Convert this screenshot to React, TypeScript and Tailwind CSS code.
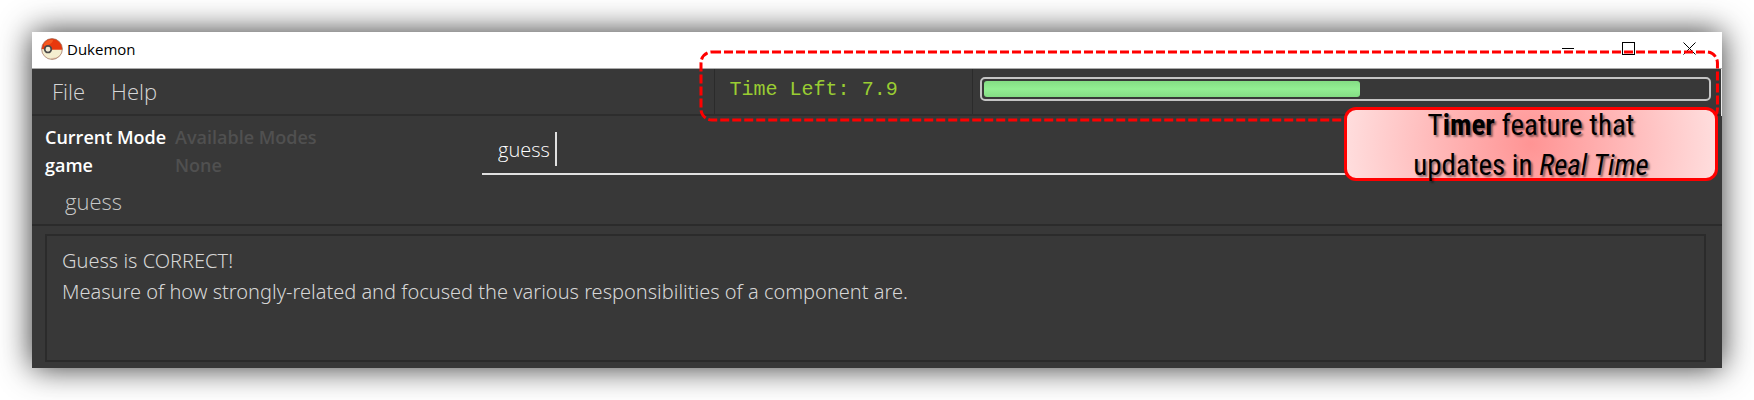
import type { ReactNode } from "react";

const TIME_LEFT = 7.9;
const TIME_TOTAL = 15.2;

const MODES = [
  ["Current Mode", "Available Modes"],
  ["game", "None"],
];

const RESULT = [
  "Guess is CORRECT!",
  "Measure of how strongly-related and focused the various responsibilities of a component are.",
].join("\n");

function BallIcon() {
  return (
    <svg viewBox="0 0 22 22" className="size-[22px]" aria-hidden="true">
      <defs>
        <clipPath id="ball">
          <circle cx="11" cy="11" r="10.4" />
        </clipPath>
      </defs>
      <g clipPath="url(#ball)">
        <rect width="22" height="22" fill="#f4eed0" />
        <path d="M22 12 C21 17 17 20 10 20 L11 23 L23 22 Z" fill="#e2c9ae" />
        <path d="M0 0 H22 V11.8 H10 L0 11 Z" fill="#e8380d" />
        <path d="M3 6 C5 2 10 1 12 2 C12 5 8 7 3 8 Z" fill="#f4581f" />
      </g>
      <circle cx="11" cy="11" r="10.4" fill="none" stroke="#9a6a58" strokeWidth="0.7" />
      <circle cx="7" cy="11.2" r="3.3" fill="#f1ead2" stroke="#4a4a4a" strokeWidth="1.7" />
    </svg>
  );
}

function WindowButton({ label, children }: { label: string; children: ReactNode }) {
  return (
    <button type="button" aria-label={label} className="flex h-full w-[61px] items-center justify-center">
      <svg viewBox="0 0 13 13" className="size-[13px]" fill="none" stroke="#000" shapeRendering="crispEdges">
        {children}
      </svg>
    </button>
  );
}

function TitleBar() {
  return (
    <header className="flex h-[37px] items-center border-b border-[#aaaaaa] bg-white">
      <div className="flex flex-1 items-center gap-1 pb-0.5 pl-[9px]">
        <BallIcon />
        <h1 className="text-[15px] leading-5 text-black">Dukemon</h1>
      </div>
      <div className="flex h-full pr-0.5 pb-1">
        <WindowButton label="Minimize">
          <path d="M0.5 6.5 H12.5" />
        </WindowButton>
        <WindowButton label="Maximize">
          <rect x="0.5" y="0.5" width="12" height="12" />
        </WindowButton>
        <WindowButton label="Close">
          <path d="M0.5 0.5 L12.5 12.5 M12.5 0.5 L0.5 12.5" shapeRendering="auto" />
        </WindowButton>
      </div>
    </header>
  );
}

function TimerBar() {
  return (
    <div className="flex items-start pt-2 pr-2.5 pl-[7px]">
      <div
        role="progressbar"
        aria-label="Time left"
        aria-valuemin={0}
        aria-valuemax={TIME_TOTAL}
        aria-valuenow={TIME_LEFT}
        className="h-6 flex-1 rounded-[5px] border-2 border-[#c4c4c4] p-0.5"
      >
        <div
          className="h-full rounded-[3px] bg-linear-to-b from-[#84dd84] via-[#93ee93] to-[#84dd84]"
          style={{ width: `${(TIME_LEFT / TIME_TOTAL) * 100}%` }}
        />
      </div>
    </div>
  );
}

function MenuRow() {
  return (
    <div className="border-r border-[#e8e8e8]">
      <div className="grid h-[47px] grid-cols-[682fr_259fr_749fr] border-b-2 border-[#2d2d2d]">
        <nav className="flex items-center gap-[26px] pb-0.5 pl-5 text-[22px] leading-[30px] font-light text-[#d6d6d6]">
          <button type="button">File</button>
          <button type="button">Help</button>
        </nav>
        <p className="border-l border-[#2b2b2b] pt-[7px] pl-[15px] font-['Liberation_Mono',monospace] text-[20px] leading-7 text-[#9acd32]">
          Time Left: {TIME_LEFT}
        </p>
        <div className="border-l border-[#2b2b2b]">
          <TimerBar />
        </div>
      </div>
    </div>
  );
}

function ModeTable() {
  return (
    <table className="text-left text-[18px] leading-7 font-semibold">
      <tbody>
        {MODES.map(([current, available]) => (
          <tr key={current}>
            <td className="w-[130px] p-0 whitespace-nowrap text-white">{current}</td>
            <td className="p-0 whitespace-nowrap text-[#505050]">{available}</td>
          </tr>
        ))}
      </tbody>
    </table>
  );
}

function CommandRow() {
  return (
    <div className="grid h-[110px] grid-cols-[450fr_1240fr] border-b-2 border-[#2b2b2b]">
      <div className="pt-[7px] pl-[13px]">
        <ModeTable />
        <p className="mt-1 pl-5 text-[22px] leading-9 font-light text-[#c8c8c8]">guess</p>
      </div>
      <div className="pt-4 pr-4">
        <label className="flex h-[43px] cursor-text items-start border-b-2 border-[#e0e0e0] pl-4">
          <input
            type="text"
            aria-label="Command"
            defaultValue="guess "
            className="field-sizing-content bg-transparent text-[20px] leading-9 font-light text-white outline-none"
          />
          <span className="h-[34px] w-0.5 bg-[#e0e0e0]" />
        </label>
      </div>
    </div>
  );
}

function TimerHighlight() {
  return (
    <div className="pointer-events-none absolute top-[19px] right-1 left-[39.5%] h-[70px]">
      <svg className="size-full overflow-visible p-px" aria-hidden="true">
        <rect
          width="100%"
          height="100%"
          rx="11"
          fill="none"
          stroke="#ff0000"
          strokeWidth="3"
          strokeDasharray="9 3"
        />
      </svg>
    </div>
  );
}

function Callout() {
  return (
    <aside className="absolute top-[75px] right-1 flex h-[74px] w-[374px] items-center justify-center rounded-xl border-3 border-[#ff0000] bg-[radial-gradient(circle,#ff9494_0%,#ffb8b8_50%,#ffdede_100%)] pt-0.5 text-center font-['Roboto_Condensed','Liberation_Sans_Narrow',sans-serif] text-[29px] leading-10 text-black text-shadow-[2px_2px_2px_rgba(0,0,0,0.45)]">
      <p>
        T<b>imer</b> feature that
        <br />
        updates in <i>Real Time</i>
      </p>
    </aside>
  );
}

export default function App() {
  return (
    <div className="bg-white p-8 font-['Open_Sans','Noto_Sans',sans-serif]">
      <main className="relative bg-[#383838] shadow-[0_0_30px_rgba(0,0,0,0.8)]">
        <TitleBar />
        <MenuRow />
        <CommandRow />
        <section className="pt-2 pr-4 pb-1.5 pl-[13px]">
          <textarea
            readOnly
            aria-label="Result"
            value={RESULT}
            className="block h-[128px] w-full resize-none border-2 border-[#2b2b2b] bg-transparent px-[15px] py-[9px] font-['Noto_Sans','Open_Sans',sans-serif] text-[20px] leading-[31px] font-light text-[#d6d6d6] outline-none"
          />
        </section>
        <TimerHighlight />
        <Callout />
      </main>
    </div>
  );
}
